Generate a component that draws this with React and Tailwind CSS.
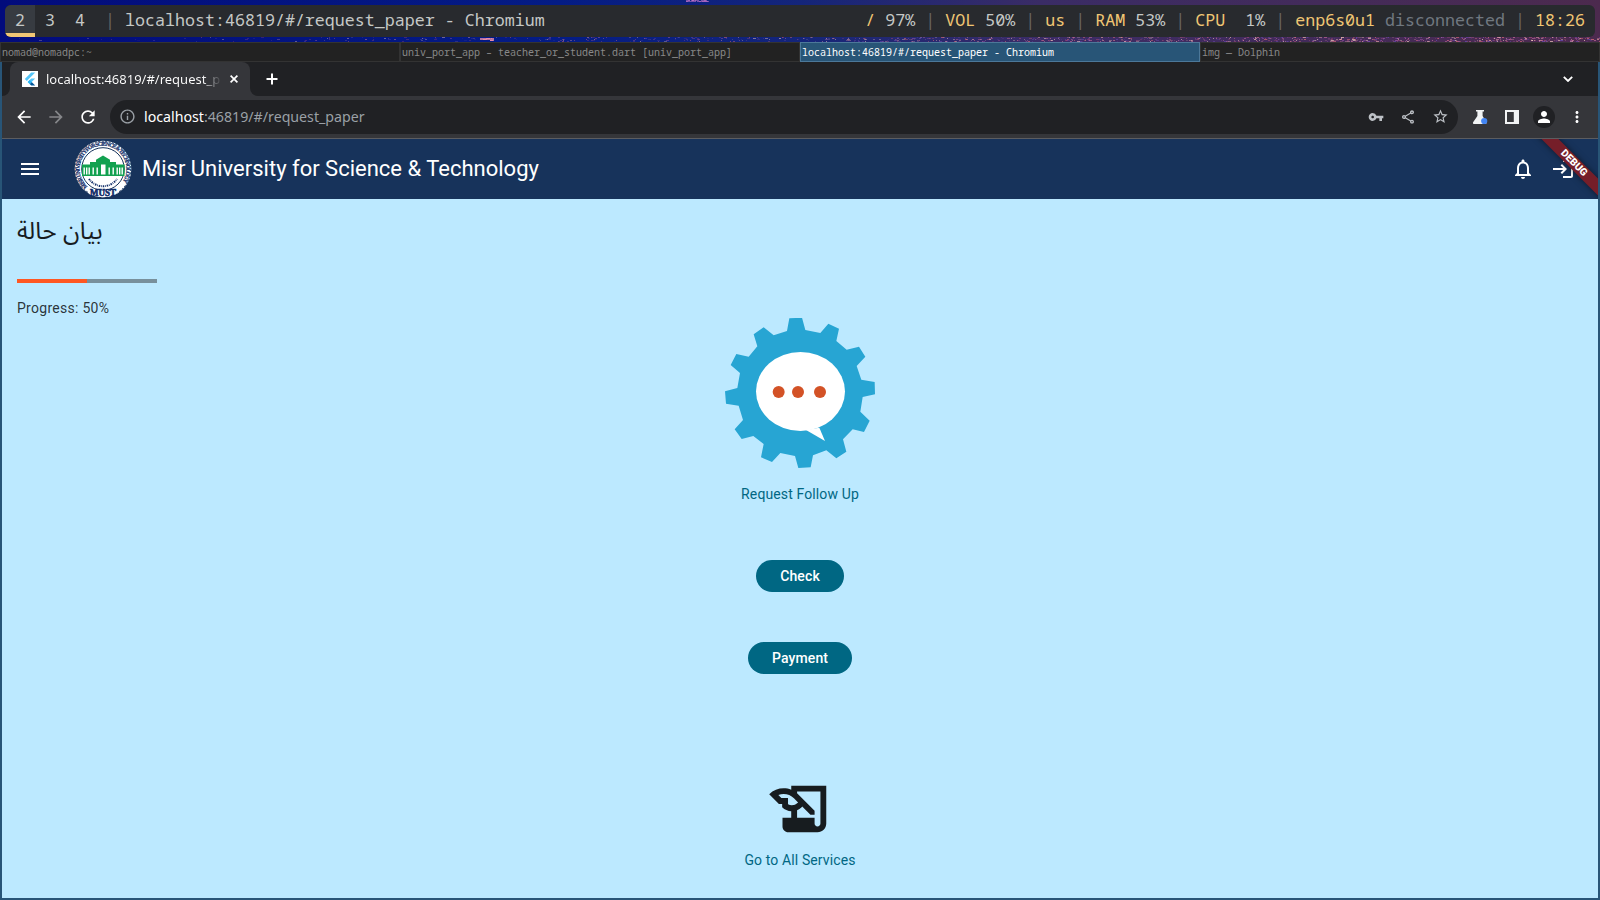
import {
  MdArrowBack,
  MdArrowForward,
  MdRefresh,
  MdVpnKey,
  MdOutlineShare,
  MdStarBorder,
  MdMoreVert,
  MdPerson,
  MdMenu,
  MdNotificationsNone,
  MdLogin,
  MdHistoryEdu,
  MdOutlineInfo,
} from "react-icons/md";

const MONO = "font-['Noto_Sans_Mono',monospace]";

/* City lights of the wallpaper, visible above and below the status bar. */
function makeLights() {
  let seed = 7;
  const rnd = () => {
    seed = (seed * 16807) % 2147483647;
    return seed / 2147483647;
  };
  const tones = ["#c46a9a", "#e8a0a8", "#8a4a9a", "#d86a78", "#f4c8c0", "#a04878", "#6a4ab0"];
  const lights = [];
  for (let i = 0; i < 1000; i++) {
    const x = Math.floor(1600 * Math.pow(rnd(), 0.45));
    const pick = Math.floor(rnd() * tones.length);
    lights.push({
      x,
      y: 37 + Math.floor(rnd() * 5),
      w: 1 + Math.floor(rnd() * 2.4),
      fill: tones[pick],
      o: (0.2 + rnd() * 0.6) * (0.4 + (0.6 * x) / 1600),
    });
  }
  for (let i = 0; i < 30; i++) {
    lights.push({ x: 686 + Math.floor(rnd() * 22), y: Math.floor(rnd() * 2), w: 2, fill: "#c070c8", o: 0.6 });
  }
  for (let i = 0; i < 20; i++) {
    lights.push({ x: 480 + Math.floor(rnd() * 12), y: 38 + Math.floor(rnd() * 3), w: 3, fill: "#e88aa8", o: 0.8 });
  }
  return lights;
}
const LIGHTS = makeLights();

function Wallpaper() {
  return (
    <svg className="absolute inset-0" width="1600" height="42" shapeRendering="crispEdges">
      <defs>
        <linearGradient id="sky">
          <stop offset="0" stopColor="#020b7c" />
          <stop offset="0.35" stopColor="#041c85" />
          <stop offset="0.5" stopColor="#14257a" />
          <stop offset="0.65" stopColor="#3a2c66" />
          <stop offset="1" stopColor="#4c2a4e" />
        </linearGradient>
      </defs>
      <rect width="1600" height="42" fill="url(#sky)" />
      {LIGHTS.map((l, i) => (
        <rect key={i} x={l.x} y={l.y} width={l.w} height="1" fill={l.fill} opacity={l.o} />
      ))}
    </svg>
  );
}

const Sep = () => <span className="text-[#6b6664]">{" | "}</span>;
const Key = ({ children }) => <span className="text-[#f0c674]">{children}</span>;

function StatusBar() {
  return (
    <div className="relative h-[42px] px-[5px] py-[5px]">
      <Wallpaper />
      <div
        className={`relative flex h-8 items-stretch overflow-hidden rounded-md bg-[#282a2e] text-[16.67px] leading-[30px] whitespace-pre text-[#c5c8c6] ${MONO}`}
      >
        <div className="w-[30px] border-b-4 border-[#f0c674] bg-[#373b41] text-center">2</div>
        <div className="w-[30px] text-center">3</div>
        <div className="w-[30px] text-center">4</div>
        <Sep />
        <div>localhost:46819/#/request_paper - Chromium</div>
        <div className="ml-auto pr-[10px]">
          <Key>/</Key> 97%
          <Sep />
          <Key>VOL</Key> 50%
          <Sep />
          <Key>us</Key>
          <Sep />
          <Key>RAM</Key> 53%
          <Sep />
          <Key>CPU</Key>
          {"  1%"}
          <Sep />
          <Key>enp6s0u1</Key> <span className="text-[#707880]">disconnected</span>
          <Sep />
          <Key>18:26</Key>
        </div>
      </div>
    </div>
  );
}

function WindowTitle({ children, active }) {
  return (
    <div
      className={`h-5 border pl-px text-[10px] leading-[18px] whitespace-pre ${MONO} ${
        active ? "border-[#4c7899] bg-[#285577] text-white" : "border-[#333333] bg-[#222222] text-[#888888]"
      }`}
    >
      {children}
    </div>
  );
}

function FlutterIcon() {
  return (
    <svg width="16" height="16" viewBox="0 0 16 16" className="bg-white">
      <path d="M9.2 1.6 2.8 8l2 2 8.4-8.4z" fill="#54c5f8" />
      <path d="M9.2 7.5 5.7 11l2 2 5.5-5.5z" fill="#54c5f8" />
      <path d="m7.7 13 1.5 1.5h4L9.7 11z" fill="#01579b" />
      <path d="m5.7 11 2-2 2 2-2 2z" fill="#29b6f6" />
    </svg>
  );
}

function TabStrip() {
  return (
    <div className="flex h-[34px] items-stretch bg-[#202124] text-white">
      <div className="flex w-2 items-end bg-[#35363a]">
        <div className="h-full w-full rounded-br-lg bg-[#202124]" />
      </div>
      <div className="flex w-[240px] items-center rounded-t-lg bg-[#35363a] pl-3">
        <FlutterIcon />
        <div className="mt-px ml-2 bg-gradient-to-r from-white from-90% to-[#46474b] bg-clip-text font-['Noto_Sans',sans-serif] text-[13px] whitespace-nowrap text-transparent">
          localhost:46819/#/request_p
        </div>
        <svg width="8" height="8" viewBox="0 0 8 8" className="mr-3 ml-auto" stroke="#fff" strokeWidth="1.7">
          <path d="m.6.6 6.8 6.8M7.4.6.6 7.4" />
        </svg>
      </div>
      <div className="flex flex-1 bg-[#35363a]">
        <div className="flex h-full flex-1 items-center justify-between rounded-bl-lg bg-[#202124] pr-[25px] pl-4">
          <svg width="12" height="12" viewBox="0 0 12 12" stroke="#fff" strokeWidth="2">
            <path d="M6 .5v11M.5 6h11" />
          </svg>
          <svg width="10" height="6" viewBox="0 0 10 6" fill="none" stroke="#fff" strokeWidth="1.8">
            <path d="M.8.8 5 5 9.2.8" />
          </svg>
        </div>
      </div>
    </div>
  );
}

function FlaskIcon() {
  return (
    <svg width="16" height="16" viewBox="0 0 16 16">
      <path d="M4 1h8v1.6h-1.4V7l3.8 6.3a1.2 1.2 0 0 1-1 1.7H2.1a1.2 1.2 0 0 1-1-1.8L5.4 7V2.6H4z" fill="#f1f3f4" />
      <circle cx="12.2" cy="12" r="3.1" fill="#4285f4" />
    </svg>
  );
}

function Toolbar() {
  return (
    <div className="flex h-[43px] items-center border-b border-[#5c5d60] bg-[#35363a] pb-px">
      <div className="flex w-[108px] items-center gap-3 pl-3">
        <MdArrowBack className="text-white" size={20} />
        <MdArrowForward className="text-[#86878a]" size={20} />
        <MdRefresh className="text-white" size={20} />
      </div>
      <div className="flex h-[34px] w-[1348px] items-center rounded-full bg-[#202124] pr-[9px] pl-[9px] text-[#bdc1c6]">
        <MdOutlineInfo className="text-[#9aa0a6]" size={17} />
        <div className="ml-2 flex-1 font-['Noto_Sans',sans-serif] text-[14.2px] text-[#9aa0a6]">
          <span className="text-white">localhost</span>:46819/#/request_paper
        </div>
        <div className="flex items-center gap-4">
          <MdVpnKey size={16} />
          <MdOutlineShare size={16} />
          <MdStarBorder size={17} />
        </div>
      </div>
      <div className="flex flex-1 items-center pl-[14px]">
        <FlaskIcon />
        <svg width="14" height="14" viewBox="0 0 14 14" className="ml-[17px]">
          <path d="M0 0h14v14H0zM2 2v10h6.8V2z" fill="#f1f3f4" fillRule="evenodd" />
        </svg>
        <div className="ml-[14px] flex size-[22px] items-center justify-center rounded-full bg-[#202124] text-white">
          <MdPerson size={18} />
        </div>
        <MdMoreVert className="ml-[13px] text-white" size={18} />
      </div>
    </div>
  );
}

function UniversityLogo() {
  return (
    <svg width="58" height="58" viewBox="-29 -29 58 58">
      <defs>
        <path id="logo-ring" d="M-15.5 17.5A23.4 23.4 0 1 1 15.5 17.5" />
      </defs>
      <circle r="28.3" fill="#fff" />
      <circle r="27.8" fill="none" stroke="#17335b" strokeWidth="1" strokeDasharray="2 1.5" />
      <circle r="21.3" fill="none" stroke="#17335b" strokeWidth="1" />
      <text
        fontSize="5.6"
        fontWeight="700"
        fill="#14306a"
        stroke="#14306a"
        strokeWidth="0.25"
        className="font-['Liberation_Serif',serif]"
      >
        <textPath href="#logo-ring" textLength="106">
          MISR UNIVERSITY FOR SCIENCE &amp; TECHNOLOGY
        </textPath>
      </text>
      <path d="M-21-4.500h8V-7h6v-2.200L0-13.500l7 4.300V-7h6v2.500h8.500V7H-21z" fill="#12a150" />
      <path
        d="M-19.500-1.500h1.400v7h-1.400zM-17-1.500h1.400v7H-17zM-14.500-1.500h1.400v7h-1.400zM-10.500-1.500h1.400v7h-1.400zM-6.500-1.500h1.400v7h-1.400zM-2-4.500h4.500v10H-2zM5.500-1.500h1.400v7H5.500zM9.500-1.500h1.400v7H9.500zM13.500-1.500h1.400v7h-1.400zM16-1.500h1.400v7H16zM18.500-1.500h1.400v7h-1.400z"
        fill="#fff"
      />
      <path
        d="M-14 10A17.200 17.200 0 0 0 14 10"
        fill="none"
        stroke="#14306a"
        strokeWidth="2"
        strokeDasharray="1.5 0.8 0.7 1"
      />
      <path d="M-13 19.500Q0 24 13 19.500L15 24Q0 32-14 25z" fill="#fff" />
      <text
        x="0"
        y="26.800"
        textAnchor="middle"
        fontSize="10"
        fontWeight="700"
        textLength="26"
        lengthAdjust="spacingAndGlyphs"
        fill="#0f2a68"
        stroke="#0f2a68"
        strokeWidth="0.6"
        className="font-['Liberation_Serif',serif]"
      >
        MUST
      </text>
    </svg>
  );
}

function AppBar() {
  return (
    <div className="relative flex h-[60px] items-center overflow-hidden bg-[#17335b] pr-[23px] pl-4 text-white">
      <MdMenu size={24} />
      <div className="ml-8">
        <UniversityLogo />
      </div>
      <div className="ml-[10px] text-[22px] leading-7">Misr University for Science &amp; Technology</div>
      <MdNotificationsNone className="ml-auto" size={24} />
      <MdLogin className="ml-4" size={24} />
      <div className="absolute top-[18px] right-[-26px] flex h-3 w-[100px] rotate-45 items-center justify-center bg-[#751e29] text-[10.2px] leading-3 font-black shadow-[0_0_6px_rgba(0,0,0,0.5)]">
        DEBUG
      </div>
    </div>
  );
}

function GearIcon() {
  return (
    <svg width="150" height="150" viewBox="45 39 450 450">
      <path
        fill="#27a5d3"
        d="M231 78 238 40 276 38 286 75 331 84 355 56 387 71 379 108 410 134 447 125 466 155 440 183 454 224 494 231 495 268 458 276 451 320 479 347 462 381 428 373 399 403 409 440 379 460 349 436 309 451 302 487 265 489 255 453 211 444 186 471 153 457 161 417 130 393 95 402 74 373 99 345 86 302 48 296 45 259 82 249 90 204 62 180 79 147 116 155 142 124 131 88 161 67 191 91Z"
      />
      <ellipse cx="271.5" cy="259.5" rx="133.5" ry="118.5" fill="#fff" />
      <path d="m288 375 57 33-17-40z" fill="#fff" />
      <g fill="#d35226">
        <circle cx="206" cy="261" r="18" />
        <circle cx="264" cy="261" r="18" />
        <circle cx="330" cy="261" r="18" />
      </g>
    </svg>
  );
}

function PillButton({ children }) {
  return <button className="h-8 rounded-full bg-[#006783] px-6 text-sm font-medium text-white">{children}</button>;
}

function RequestPage() {
  return (
    <div className="flex flex-1 flex-col bg-[#bce9ff] text-[#171c1f]">
      <div className="flex h-[119px] flex-col items-start pl-[15px]">
        <div dir="rtl" className="mt-[14px] h-9 font-['Noto_Sans_Arabic',sans-serif] text-[24.4px] leading-9">
          بيان حالة
        </div>
        <div className="mt-[30px] h-1 w-[140px] bg-[#78909c]">
          <div className="h-full w-1/2 bg-[#ff5722]" />
        </div>
        <div className="mt-[15px] text-sm tracking-[0.28px] text-[#171c1f]/90">Progress: 50%</div>
      </div>
      <div className="flex flex-col items-center text-sm tracking-[0.12px] text-[#006783]">
        <GearIcon />
        <div className="mt-4">Request Follow Up</div>
        <div className="mt-[56px] flex flex-col items-center gap-[50px]">
          <PillButton>Check</PillButton>
          <PillButton>Payment</PillButton>
        </div>
        <MdHistoryEdu className="mt-[100px] text-[#171c1f]" size={70} />
        <div className="mt-[6px]">Go to All Services</div>
      </div>
    </div>
  );
}

export default function App() {
  return (
    <div className="flex h-[900px] w-[1600px] flex-col overflow-hidden bg-[#285577] font-['Roboto',sans-serif]">
      <StatusBar />
      <div className="grid grid-cols-4">
        <WindowTitle>nomad@nomadpc:~</WindowTitle>
        <WindowTitle>univ_port_app – teacher_or_student.dart [univ_port_app]</WindowTitle>
        <WindowTitle active>localhost:46819/#/request_paper - Chromium</WindowTitle>
        <WindowTitle>img — Dolphin</WindowTitle>
      </div>
      <div className="flex flex-1 flex-col px-[2px] pb-[2px]">
        <TabStrip />
        <Toolbar />
        <AppBar />
        <RequestPage />
      </div>
    </div>
  );
}
